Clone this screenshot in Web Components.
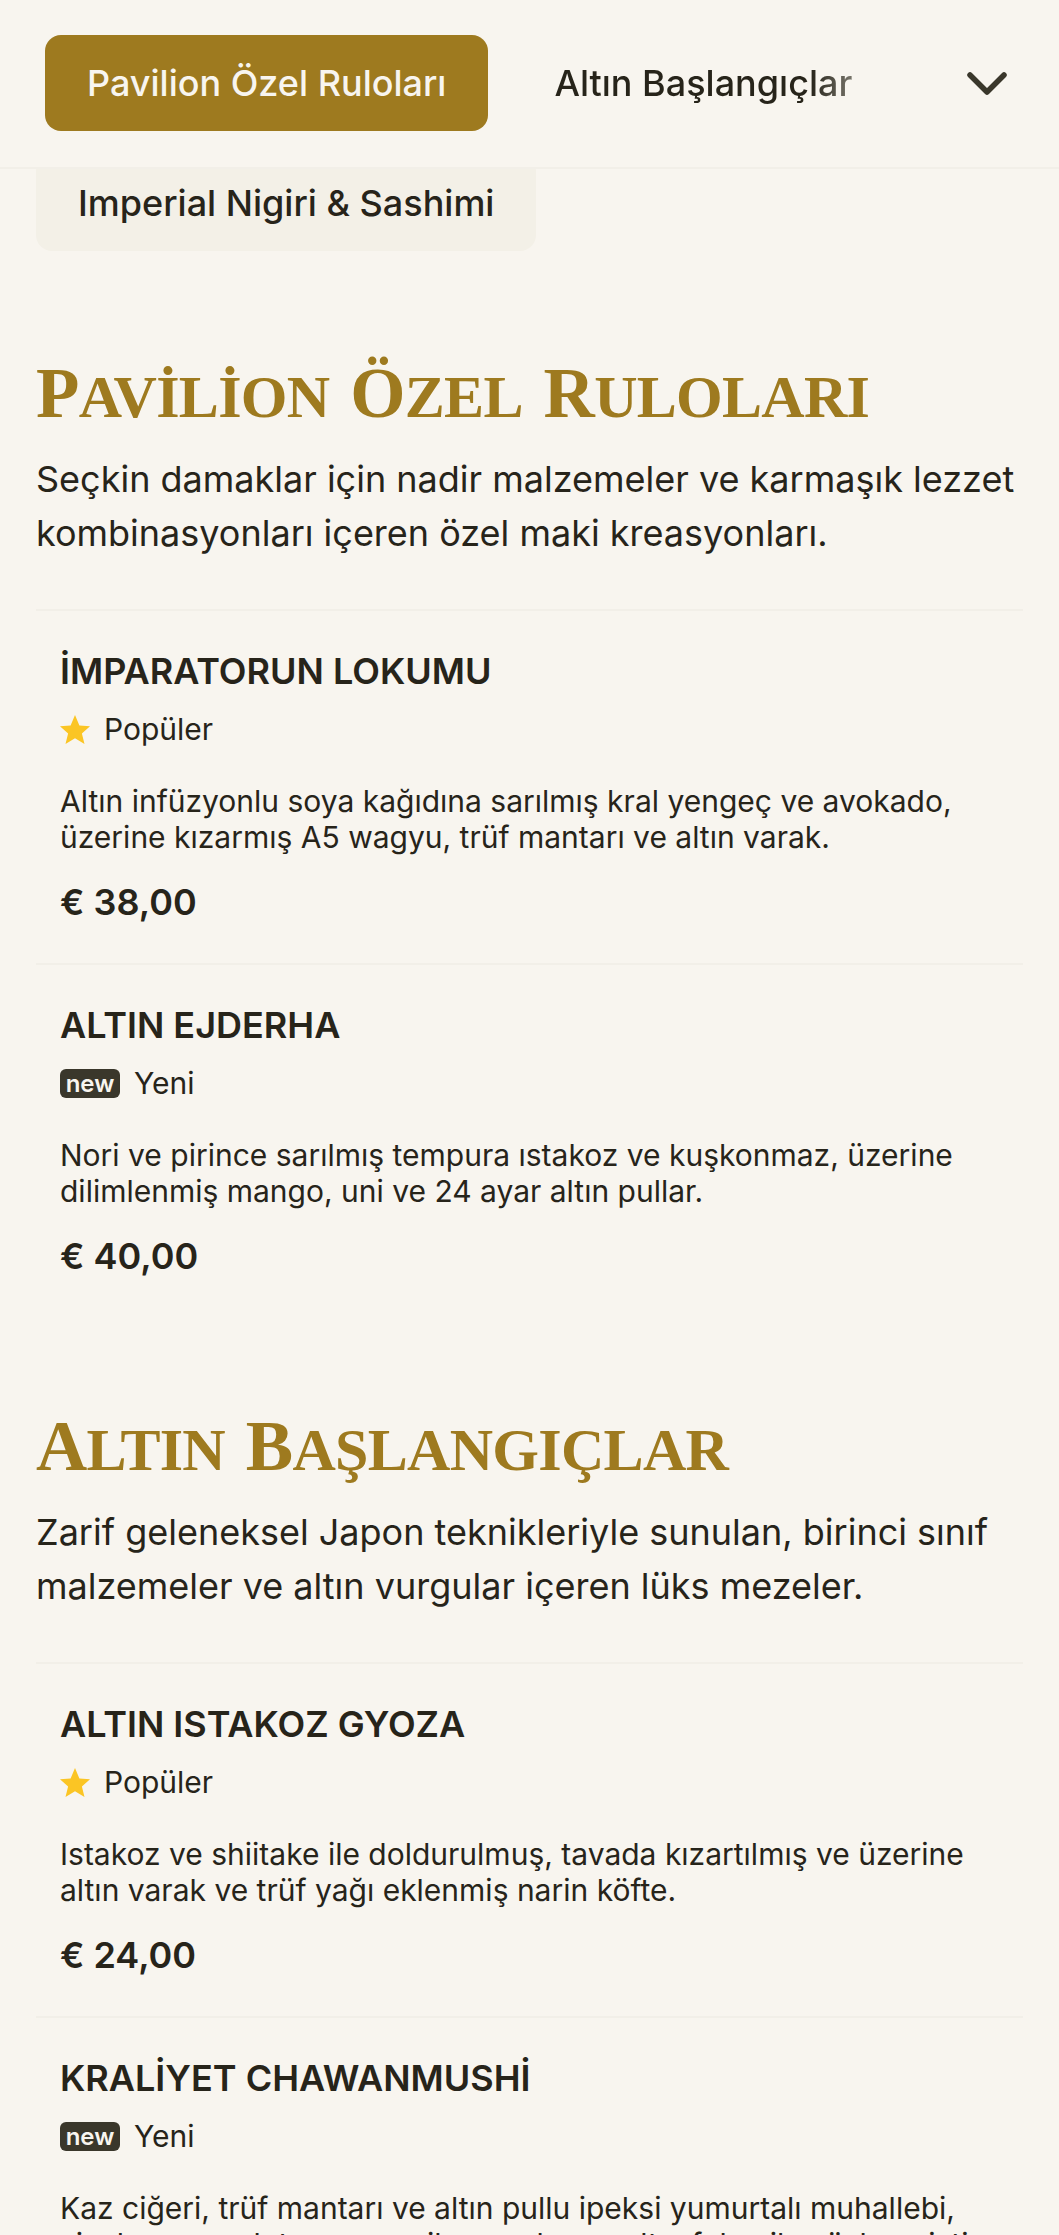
<!DOCTYPE html>
<html lang="tr">
<head>
<meta charset="utf-8">
<title>Menü</title>
<style>
  html, body { margin: 0; padding: 0; background: #f8f5ef; }
  body { font-family: Inter, "Liberation Sans", sans-serif; color: #27241a; height: 2235px; overflow: hidden; }
</style>
</head>
<body>
<menu-page></menu-page>
<script>
const navTemplate = document.createElement("template");
navTemplate.innerHTML = `
  <style>
    :host { display: block; }
    .bar {
      display: flex; align-items: center; height: 169px; box-sizing: border-box;
      padding: 0 52px 0 45px; border-bottom: 2px solid #f2efe8; background: #f8f5ef;
      position: relative; z-index: 1;
    }
    .tabs { display: flex; align-items: center; flex: 1; gap: 66px; overflow: hidden; margin-top: -1px; }
    .tab { font-size: 36px; font-weight: 500; white-space: nowrap; line-height: 96px; color: #27241a; }
    .tab.active { background: #9e7a1f; color: #f8f5ef; border-radius: 16px; padding: 0 42px; }
    .tab.fade { color: transparent; background: linear-gradient(90deg, #27241a 86%, #77746a 100%); -webkit-background-clip: text; background-clip: text; }
    svg { width: 40px; height: 23px; display: block; }
    .extra { display: flex; margin: -14px 0 0 36px; height: 96px; width: 500px; box-sizing: border-box; align-items: center; padding: 0 0 0 42px; border-radius: 16px; background: #f3f0e7; font-size: 36px; font-weight: 500; color: #27241a; }
  </style>
  <div class="bar">
    <div class="tabs">
      <span class="tab active">Pavilion Özel Ruloları</span>
      <span class="tab fade">Altın Başlangıçlar</span>
    </div>
    <svg viewBox="0 0 40 23" fill="none" stroke="#3a372b" stroke-width="5.5" stroke-linecap="round" stroke-linejoin="round"><path d="M3 3 L20 20 L37 3"/></svg>
  </div>
  <div class="extra">Imperial Nigiri &amp; Sashimi</div>
`;
class MenuNav extends HTMLElement {
  constructor() {
    super();
    this.attachShadow({ mode: "open" });
    this.shadowRoot.appendChild(navTemplate.content.cloneNode(true));
  }
}
customElements.define("menu-nav", MenuNav);

const sectionTemplate = document.createElement("template");
sectionTemplate.innerHTML = `
  <style>
    :host { display: block; padding: 0 36px; }
    h2 {
      margin: 0; font: 700 86px/80px "Liberation Serif", serif; font-variant: small-caps;
      color: #9e7a1f; letter-spacing: -.7px;
    }
    h2 b { font-size: 71px; font-weight: 700; }
    p { margin: 19px 0 49px; font-size: 36px; line-height: 54px; color: #27241a; }
    .items { border-top: 2px solid #f2efe8; }
  </style>
  <h2></h2>
  <p></p>
  <div class="items"><slot></slot></div>
`;
class MenuSection extends HTMLElement {
  constructor() {
    super();
    this.attachShadow({ mode: "open" });
    this.shadowRoot.appendChild(sectionTemplate.content.cloneNode(true));
  }
  connectedCallback() {
    // capitals are set apart so the small caps can be sized on their own
    const h2 = this.shadowRoot.querySelector("h2");
    this.getAttribute("heading").split(" ").forEach((word, i) => {
      if (i) h2.append(" ");
      const cap = document.createElement("b");
      cap.textContent = word[0];
      h2.append(cap, word.slice(1));
    });
    this.shadowRoot.querySelector("p").textContent = this.getAttribute("intro");
  }
}
customElements.define("menu-section", MenuSection);

const itemTemplate = document.createElement("template");
itemTemplate.innerHTML = `
  <style>
    :host { display: block; padding: 38px 24px 0; height: 354px; box-sizing: border-box; border-bottom: 2px solid #f2efe8; }
    :host(:last-child) { border-bottom: none; }
    h3 { margin: 0; font-size: 36px; line-height: 44px; font-weight: 600; color: #27241a; }
    .tag { display: flex; align-items: center; height: 36px; margin-top: 18px; font-size: 30px; color: #27241a; }
    .tag svg { width: 30px; height: 29px; margin-right: 14px; }
    .new { display: inline-flex; align-items: center; justify-content: center; width: 60px; height: 29px; border-radius: 6px; background: #3a372b; color: #f8f5ef; font-size: 24px; font-weight: 600; margin-right: 14px; }
    .desc { margin: 36px 0 0; font-size: 30px; line-height: 36px; color: #27241a; }
    .price { margin-top: 25px; font-size: 36px; line-height: 44px; font-weight: 600; color: #27241a; }
  </style>
  <h3></h3>
  <div class="tag"></div>
  <div class="desc"><slot></slot></div>
  <div class="price"></div>
`;
class MenuItem extends HTMLElement {
  constructor() {
    super();
    this.attachShadow({ mode: "open" });
    this.shadowRoot.appendChild(itemTemplate.content.cloneNode(true));
  }
  connectedCallback() {
    const root = this.shadowRoot;
    root.querySelector("h3").textContent = this.getAttribute("name");
    root.querySelector(".price").textContent = this.getAttribute("price");
    root.querySelector(".tag").innerHTML = this.getAttribute("tag") === "new"
      ? `<span class="new">new</span><span>Yeni</span>`
      : `<svg viewBox="0 0 30 29"><path fill="#fbc524" d="M15 0l4.4 10.6 10.6.7-8.1 7.2 2.6 10.5L15 23.2 5.5 29l2.6-10.5L0 11.3l10.6-.7z"/></svg><span>Popüler</span>`;
    if (!this.hasAttribute("price")) root.querySelector(".price").remove();
  }
}
customElements.define("menu-item", MenuItem);

const pageTemplate = document.createElement("template");
pageTemplate.innerHTML = `
  <style>
    :host { display: block; }
    .sections { display: flex; flex-direction: column; gap: 82px; margin-top: 97px; }
  </style>
  <menu-nav></menu-nav>
  <div class="sections">
    <menu-section heading="Pavilion Özel Ruloları" intro="Seçkin damaklar için nadir malzemeler ve karmaşık lezzet kombinasyonları içeren özel maki kreasyonları.">
      <menu-item name="İMPARATORUN LOKUMU" tag="popular" price="€ 38,00">Altın infüzyonlu soya kağıdına sarılmış kral yengeç ve avokado, üzerine kızarmış A5 wagyu, trüf mantarı ve altın varak.</menu-item>
      <menu-item name="ALTIN EJDERHA" tag="new" price="€ 40,00">Nori ve pirince sarılmış tempura ıstakoz ve kuşkonmaz, üzerine dilimlenmiş mango, uni ve 24 ayar altın pullar.</menu-item>
    </menu-section>
    <menu-section heading="Altın Başlangıçlar" intro="Zarif geleneksel Japon teknikleriyle sunulan, birinci sınıf malzemeler ve altın vurgular içeren lüks mezeler.">
      <menu-item name="ALTIN ISTAKOZ GYOZA" tag="popular" price="€ 24,00">Istakoz ve shiitake ile doldurulmuş, tavada kızartılmış ve üzerine altın varak ve trüf yağı eklenmiş narin köfte.</menu-item>
      <menu-item name="KRALİYET CHAWANMUSHİ" tag="new">Kaz ciğeri, trüf mantarı ve altın pullu ipeksi yumurtalı muhallebi, siyah sarımsak topraması ile sunulur ve altın folyo ile süslenmiştir.</menu-item>
    </menu-section>
  </div>
`;
class MenuPage extends HTMLElement {
  constructor() {
    super();
    this.attachShadow({ mode: "open" });
    this.shadowRoot.appendChild(pageTemplate.content.cloneNode(true));
  }
}
customElements.define("menu-page", MenuPage);
</script>
</body>
</html>
